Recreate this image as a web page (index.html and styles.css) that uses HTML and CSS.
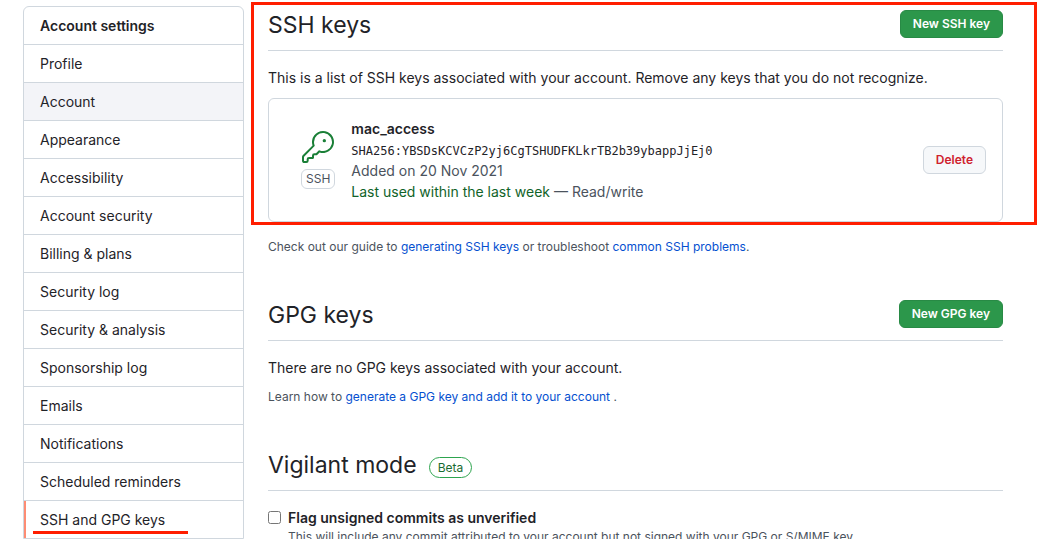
FILE: index.html
```html
<!DOCTYPE html>
<html lang="en">
<head>
<meta charset="utf-8">
<title>SSH and GPG keys</title>
<link rel="stylesheet" href="styles.css">
</head>
<body>
<div class="page">
  <nav class="menu" aria-label="Account settings">
    <h2 class="menu-heading">Account settings</h2>
    <a class="menu-item" href="#">Profile</a>
    <a class="menu-item menu-item-hover" href="#">Account</a>
    <a class="menu-item" href="#">Appearance</a>
    <a class="menu-item" href="#">Accessibility</a>
    <a class="menu-item" href="#">Account security</a>
    <a class="menu-item" href="#">Billing &amp; plans</a>
    <a class="menu-item" href="#">Security log</a>
    <a class="menu-item" href="#">Security &amp; analysis</a>
    <a class="menu-item" href="#">Sponsorship log</a>
    <a class="menu-item" href="#">Emails</a>
    <a class="menu-item" href="#">Notifications</a>
    <a class="menu-item" href="#">Scheduled reminders</a>
    <a class="menu-item menu-item-current" href="#" aria-current="page">SSH and GPG keys</a>
  </nav>
  <main class="content">
    <section class="section section-marked">
      <header class="subhead">
        <h2 class="subhead-title">SSH keys</h2>
        <button class="btn btn-primary" type="button">New SSH key</button>
      </header>
      <p class="text">This is a list of SSH keys associated with your account. Remove any keys that you do not recognize.</p>
      <div class="key-card">
        <div class="key-type">
          <svg class="key-icon" viewBox="0 0 24 24" width="32" height="32" fill="currentColor" aria-hidden="true">
            <path d="M16.75 8.5a1.25 1.25 0 100-2.5 1.25 1.25 0 000 2.5z"/>
            <path fill-rule="evenodd" d="M15.75 0a8.25 8.25 0 00-7.851 10.79L.513 18.178A1.75 1.75 0 000 19.414v2.836C0 23.217.784 24 1.75 24h1.5A1.75 1.75 0 005 22.25v-1a.25.25 0 01.25-.25h2.735a.75.75 0 00.545-.22l.214-.213A.875.875 0 009 19.948V18.5a.25.25 0 01.25-.25h1.086c.464 0 .91-.184 1.237-.513l1.636-1.636A8.25 8.25 0 1015.75 0zM9 8.25a6.75 6.75 0 114.288 6.287.75.75 0 00-.804.168l-1.971 1.972a.25.25 0 01-.177.073H9.25A1.75 1.75 0 007.5 18.5v1H5.25a1.75 1.75 0 00-1.75 1.75v1a.25.25 0 01-.25.25h-1.5a.25.25 0 01-.25-.25v-2.836a.25.25 0 01.073-.177l7.722-7.721a.75.75 0 00.168-.804A6.73 6.73 0 019 8.25z"/>
          </svg>
          <span class="key-label">SSH</span>
        </div>
        <div class="key-info">
          <strong class="key-name">mac_access</strong>
          <code class="key-hash">SHA256:YBSDsKCVCzP2yj6CgTSHUDFKLkrTB2b39ybappJjEj0</code>
          <span>Added on 20 Nov 2021</span>
          <span><span class="key-recent">Last used within the last week</span> — Read/write</span>
        </div>
        <button class="btn btn-danger" type="button">Delete</button>
      </div>
      <p class="note">Check out our guide to <a href="#">generating SSH keys</a> or troubleshoot <a href="#">common SSH problems</a>.</p>
    </section>
    <section class="section">
      <header class="subhead">
        <h2 class="subhead-title">GPG keys</h2>
        <button class="btn btn-primary" type="button">New GPG key</button>
      </header>
      <p class="text">There are no GPG keys associated with your account.</p>
      <p class="note note-near">Learn how to <a href="#">generate a GPG key and add it to your account</a> .</p>
    </section>
    <section class="section">
      <header class="subhead">
        <h2 class="subhead-title">Vigilant mode</h2>
        <span class="badge">Beta</span>
      </header>
      <div class="option">
        <input class="option-box" type="checkbox" id="flag-unsigned" aria-describedby="flag-help">
        <div class="option-body">
          <label class="option-label" for="flag-unsigned">Flag unsigned commits as unverified</label>
          <p class="option-help" id="flag-help">This will include any commit attributed to your account but not signed with your GPG or S/MIME key.</p>
        </div>
      </div>
    </section>
  </main>
</div>
</body>
</html>
```
FILE: styles.css
```css
* {
  box-sizing: border-box;
}

html {
  overflow: hidden;
}

body {
  margin: 0;
  background: #fff;
  color: #1f2328;
  font-family: Inter, "Liberation Sans", sans-serif;
  font-size: 14px;
  line-height: 21px;
}

h2,
p {
  margin: 0;
}

a {
  color: #0550d0;
  text-decoration: none;
}

.page {
  display: flex;
  align-items: flex-start;
  gap: 24px;
  padding: 6px 35px 0 23px;
}

/* Side menu */
.menu {
  flex: 0 0 221px;
  border: 1px solid #d0d7de;
  border-radius: 6px 6px 0 0;
}

.menu-heading,
.menu-item {
  display: block;
  padding: 8px 16px;
  font-size: 14px;
  line-height: 21px;
  color: #1f2328;
}

.menu-heading {
  font-weight: 600;
}

.menu-item {
  border-top: 1px solid #d0d7de;
}

.menu-item-hover {
  background: #f3f4f8;
}

.menu-item-current {
  position: relative;
}

.menu-item-current::before {
  content: "";
  position: absolute;
  inset: 0 auto 0 0;
  width: 2px;
  background: #fd8c73;
}

.menu-item-current::after {
  content: "";
  position: absolute;
  left: 9px;
  bottom: 4px;
  width: 155px;
  height: 3px;
  background: #ff1e00;
}

/* Sections */
.content {
  flex: 1;
  min-width: 0;
  padding-top: 4px;
}

.section {
  position: relative;
  margin-bottom: 44px;
}

.section-marked::after {
  content: "";
  position: absolute;
  inset: -8px -34px 31px -17px;
  border: 3px solid #ff1e00;
  pointer-events: none;
}

.subhead {
  display: flex;
  align-items: center;
  padding-bottom: 10px;
  border-bottom: 1px solid #d0d7de;
  margin-bottom: 16px;
}

.subhead-title {
  font-size: 23px;
  font-weight: 400;
  line-height: 30px;
}

.btn {
  margin-left: auto;
  padding: 3px 12px;
  border: 1px solid #d0d7de;
  border-radius: 6px;
  font-family: inherit;
  font-size: 12px;
  font-weight: 600;
  line-height: 20px;
  white-space: nowrap;
}

.btn-primary {
  align-self: flex-start;
  background: #2c974b;
  border-color: #288a45;
  color: #fff;
}

.btn-danger {
  background: #f6f8fa;
  color: #cf222e;
}

.key-card {
  display: flex;
  align-items: center;
  margin-top: 10px;
  padding: 19px 16px 19px 32px;
  border: 1px solid #d0d7de;
  border-radius: 6px;
}

.key-type {
  display: flex;
  flex-direction: column;
  align-items: center;
  gap: 6px;
  margin-right: 16px;
}

.key-icon {
  display: block;
  color: #1a7f37;
}

.key-label {
  padding: 0 4px;
  border: 1px solid #d0d7de;
  border-radius: 6px;
  color: #4b535d;
  font-size: 12px;
  line-height: 18px;
}

.key-info {
  display: flex;
  flex-direction: column;
  color: #4b535d;
}

.key-name {
  color: #1f2328;
  font-weight: 600;
}

.key-hash {
  padding-top: 3px;
  color: #1f2328;
  font-family: "DejaVu Sans Mono", monospace;
  font-size: 12px;
  line-height: 18px;
}

.key-recent {
  color: #116329;
}

.note {
  margin-top: 16px;
  color: #4b535d;
  font-size: 12px;
  line-height: 18px;
}

.note-near {
  margin-top: 10px;
}

.badge {
  margin: 4px 0 0 12px;
  padding: 0 8px;
  border: 1px solid #2da44e;
  border-radius: 12px;
  color: #1a6b32;
  font-size: 12px;
  line-height: 19px;
}

/* Checkbox option */
.option {
  display: flex;
  align-items: flex-start;
  gap: 7px;
}

.option-box {
  margin: 4px 0 0;
}

.option-label {
  font-weight: 600;
}

.option-help {
  color: #4b535d;
  font-size: 12px;
  line-height: 18px;
}
```
